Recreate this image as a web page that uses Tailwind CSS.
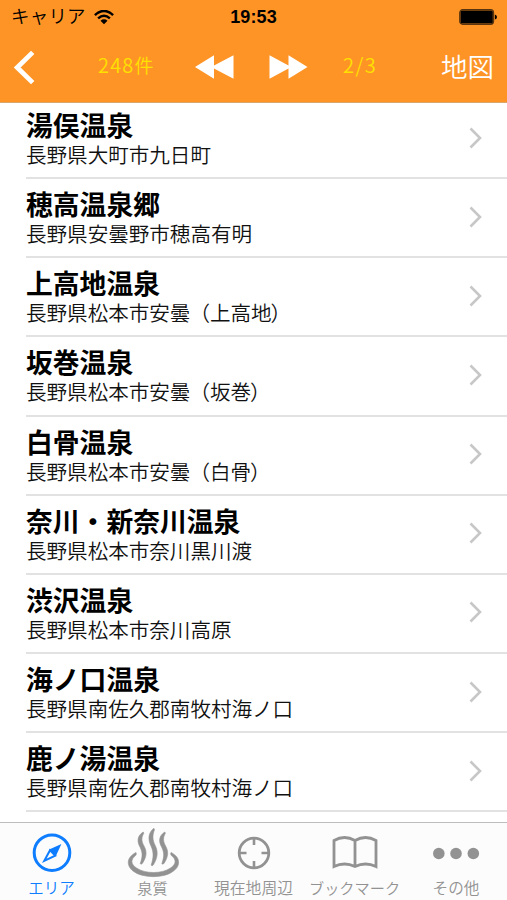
<!DOCTYPE html>
<html lang="ja">
<head>
<meta charset="utf-8">
<title>温泉一覧</title>
<script src="https://cdn.jsdelivr.net/npm/@tailwindcss/browser@4"></script>
</head>
<body class="w-[507px] h-[900px] overflow-hidden bg-white text-black flex flex-col font-['Liberation_Sans','Noto_Sans_CJK_JP',sans-serif]">
<header class="h-[103px] shrink-0 bg-[#fe9426] border-b border-[#d9a670] flex flex-col z-10">
  <div class="h-[34px] grid grid-cols-3 items-center pl-[11px] pr-[10px]">
    <div class="flex items-center gap-[8px]">
      <span class="text-[18.5px] leading-[34px] font-[350] tracking-[0.2px]">キャリア</span>
      <svg class="w-[20px] h-[15px]" viewBox="0 0 20 15" fill="none" stroke="#000" stroke-width="2.5"><path d="M.9 5.1Q10-3.2 19.1 5.1M4.1 8.4Q10 3.2 15.9 8.4"/><path d="M6.5 10.7Q10 7.8 13.5 10.7L10 14.3Z" fill="#000" stroke="none"/></svg>
    </div>
    <span class="text-center text-[18px] leading-[34px] font-bold tracking-[0.1px] -ml-[1px]">19:53</span>
    <svg class="justify-self-end w-[38px] h-[16px]" viewBox="0 0 39 16" preserveAspectRatio="none"><rect x=".7" y=".7" width="34.8" height="14.6" rx="3" fill="none" stroke="#5b350e" stroke-width="1.2"/><rect x="1.5" y="1.500" width="33.2" height="13" rx="1.5"/><path d="M36.8 5.5Q39 6 39 8T36.8 10.5Z"/></svg>
  </div>
  <div class="h-[66px] flex items-center pl-[13px] pr-[13px]">
    <svg class="w-[23px] h-[35px]" viewBox="0 0 23 35" fill="none" stroke="#fff" stroke-width="4.8"><path d="M19.7 2.4L4.2 17.5L19.7 32.6"/></svg>
    <span class="ml-[62px] w-[60px] pb-[4px] text-[20px] leading-[30px] text-[#ffe100] font-[350] whitespace-nowrap font-['Noto_Sans_CJK_JP',sans-serif]"><span class="tracking-[1.2px]">248</span><span class="text-[19px]">件</span></span>
    <svg class="ml-[37px] w-[39px] h-[24px]" viewBox="0 0 39 24" fill="#fff"><path d="M0 12L19 .2V10.5L38.5 .2V23.8L19 13.5V23.8Z"/></svg>
    <svg class="ml-[35px] w-[39px] h-[24px]" viewBox="0 0 39 24" fill="#fff"><path d="M38.5 12L19.5 .2V10.5L.5 .2V23.8L19.5 13.5V23.8Z"/></svg>
    <span class="ml-[35px] pb-[4px] text-[20px] leading-[30px] text-[#ffe100] font-[350] tracking-[1.5px] font-['Noto_Sans_CJK_JP',sans-serif]">2/3</span>
    <span class="ml-auto pt-[2px] text-[26.5px] leading-[34px] text-white font-[350]">地図</span>
  </div>
</header>
<main id="list" class="flex-1 min-h-0 overflow-hidden -mt-[3px] bg-white"></main>
<nav class="h-[78px] shrink-0 bg-[#fcfcfc] border-t border-[#bdbdbd] grid grid-cols-[103px_101px_101px_101px_101px] text-[#929292] text-[15.2px] leading-[20px] font-[350] z-10">
  <div class="flex flex-col items-center text-[#0e7dff]">
    <svg class="mt-[9px] w-[40px] h-[42px]" viewBox="0 0 40 42" fill="none" stroke="currentColor"><circle cx="20" cy="20.700" r="17.8" stroke-width="3"/><path d="M29.4 12L23.8 24.2L17.2 17.6Z" fill="currentColor" stroke="none"/><path d="M18 18.2L23.2 23.6L12.3 28.8Z" stroke-width="2"/></svg>
    <span class="mt-[5px] text-[15.5px]">エリア</span>
  </div>
  <div class="flex flex-col items-center -ml-[2px]">
    <svg class="mt-[5px] w-[52px] h-[50px]" viewBox="0 0 52 50" fill="currentColor" stroke="currentColor" stroke-width=".6"><path d="M9 24.500C-1 29.500-.5 38 6 43C15 50.500 38 50.500 46.500 43C53.500 38 54 29.500 44 24.500C43.500 25.500 43.600 26.500 44.200 27.300C49.500 31.500 49.500 36 43.500 40C35 46 18 46 9.500 40C3.500 36 3.500 31.500 8.800 27.300C9.400 26.500 9.500 25.500 9 24.500Z"/><g><path id="steam" d="M16.200 4C10 8 10 13.500 13 19C16 25 15.500 29 13.300 35.500C13.700 36.500 14.500 36.500 15.500 35.200C19.500 29 20.300 24 17 18C14.300 13 14.300 9.500 16.800 5.200Z"/><use href="#steam" x="21.600"/><path d="M26.900.3C20.800 5 21 12 24 18C27 24.500 26.500 30 24.200 37C24.600 38 25.500 38 26.400 36.800C30.500 30 31.500 24 28.200 17.500C25.400 12 25.300 7 27.500 1.700Z"/></g></svg>
    <span class="mt-[1px]">泉質</span>
  </div>
  <div class="flex flex-col items-center -ml-[2px]">
    <svg class="mt-[9px] w-[36px] h-[42px]" viewBox="0 0 36 42" fill="none" stroke="currentColor"><circle cx="18" cy="21" r="14.800" stroke-width="2.800"/><path d="M18 6V13M18 29V36M3 21H10.500M25.500 21H33" stroke-width="2.600"/></svg>
    <span class="mt-[5px] whitespace-nowrap text-[15.800px]">現在地周辺</span>
  </div>
  <div class="flex flex-col items-center -ml-[2px]">
    <svg class="mt-[9px] w-[46px] h-[42px]" viewBox="0 0 46 42" fill="none" stroke="currentColor" stroke-width="2.800"><path d="M23 8.500Q12.500 2.500 2 8.500V34.500Q12.500 29.500 23 34.500Q33.500 29.500 44 34.500V8.500Q33.500 2.500 23 8.500V34.500"/></svg>
    <span class="mt-[5px] whitespace-nowrap text-[15.200px]">ブックマーク</span>
  </div>
  <div class="flex flex-col items-center -ml-[1px]">
    <svg class="mt-[9px] w-[48px] h-[42px]" viewBox="0 0 48 42" fill="currentColor"><circle cx="6.800" cy="21.500" r="5.800"/><circle cx="24" cy="21.500" r="5.800"/><circle cx="41.300" cy="21.500" r="5.800"/></svg>
    <span class="mt-[5px] text-[15.600px]">その他</span>
  </div>
</nav>
<script>
const rows = [
  ['湯俣温泉', '長野県大町市九日町'],
  ['穂高温泉郷', '長野県安曇野市穂高有明'],
  ['上高地温泉', '長野県松本市安曇（上高地）'],
  ['坂巻温泉', '長野県松本市安曇（坂巻）'],
  ['白骨温泉', '長野県松本市安曇（白骨）'],
  ['奈川・新奈川温泉', '長野県松本市奈川黒川渡'],
  ['渋沢温泉', '長野県松本市奈川高原'],
  ['海ノ口温泉', '長野県南佐久郡南牧村海ノ口'],
  ['鹿ノ湯温泉', '長野県南佐久郡南牧村海ノ口']
];
document.getElementById('list').innerHTML = rows.map(([name, address]) => `
  <div class="ml-[26px] h-[79.150px] border-b-2 border-[#e2e2e2] flex items-center justify-between pr-[25px]">
    <div class="pt-[3px]">
      <div class="pt-[1px] -mb-[1px] text-[26.800px] leading-[31px] font-bold whitespace-nowrap">${name}</div>
      <div class="text-[20.550px] leading-[27px] font-[350] whitespace-nowrap text-[#111]">${address.replace('（', '<span class="-ml-[1px]">（</span>').replace('）', '<span class="-ml-[1px]">）</span>')}</div>
    </div>
    <svg class="w-[13px] h-[22px] mb-[2px]" viewBox="0 0 13 22" fill="none" stroke="#c7c7c7" stroke-width="2.600"><path d="M1.500 1.500L11 11L1.500 20.500"/></svg>
  </div>`).join('');
</script>
</body>
</html>
